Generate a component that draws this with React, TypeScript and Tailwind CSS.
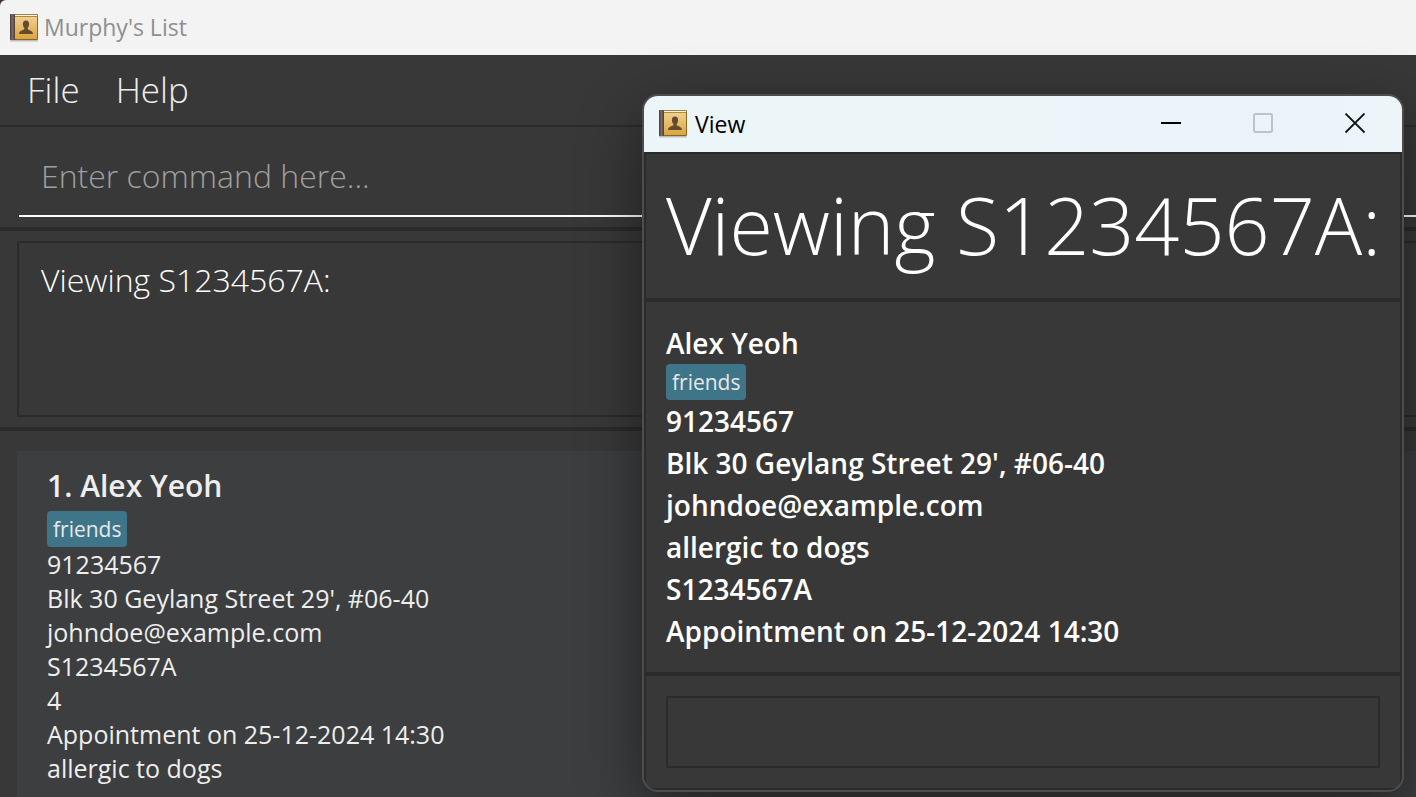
import React from "react";

const person = {
  name: "Alex Yeoh",
  tag: "friends",
  phone: "91234567",
  address: "Blk 30 Geylang Street 29', #06-40",
  email: "johndoe@example.com",
  nric: "S1234567A",
  rating: "4",
  appointment: "Appointment on 25-12-2024 14:30",
  note: "allergic to dogs",
};

function BookIcon({ id }: { id: string }) {
  return (
    <svg width="30" height="30" viewBox="0 0 30 30" aria-hidden="true" className="shrink-0">
      <defs>
        <linearGradient id={id + "-cover"} x1="0" y1="0" x2="0" y2="1">
          <stop offset="0" stopColor="#efd08f" />
          <stop offset="1" stopColor="#dba440" />
        </linearGradient>
        <linearGradient id={id + "-spine"} x1="0" y1="0" x2="1" y2="0">
          <stop offset="0" stopColor="#4a3c38" />
          <stop offset="0.5" stopColor="#7a6b65" />
          <stop offset="1" stopColor="#4a3a34" />
        </linearGradient>
      </defs>
      <rect x="1" y="27" width="28" height="1.5" rx="0.7" fill="#000" opacity="0.22" />
      <rect x="1" y="1" width="28" height="26" rx="1" fill="#8a671f" />
      <rect x="5" y="1.8" width="23.2" height="1.4" fill="#fdf6e4" />
      <rect x="5" y="3.2" width="23.2" height="0.8" fill="#b88a36" />
      <rect x="5.5" y="4" width="22.5" height="22" fill={"url(#" + id + "-cover)"} />
      <rect x="1" y="1" width="5" height="26" rx="1" fill={"url(#" + id + "-spine)"} />
      <path
        d="M17 7.600c2.100 0 3.200 1.500 3.100 3.600-.1 1.700-.7 2.800-1.400 3.500v1.500c1.200 1.100 5.100 1.200 5.300 4.800H10c.2-3.600 4.100-3.700 5.300-4.800v-1.500c-.7-.7-1.300-1.800-1.400-3.500-.1-2.100 1-3.600 3.100-3.600z"
        fill="#614d2c"
      />
    </svg>
  );
}

function Tag({ children }: { children: React.ReactNode }) {
  return (
    <span className="flex h-9 w-fit items-center rounded-sm bg-[#3e7589] px-1.5 text-[21px] font-medium text-[#e8e8e8]">
      {children}
    </span>
  );
}

function ViewWindow() {
  const rows = [
    person.phone,
    person.address,
    person.email,
    person.note,
    person.nric,
    person.appointment,
  ];
  return (
    <section
      role="dialog"
      aria-label="View"
      className="absolute top-[94px] right-3 w-[762px] overflow-hidden rounded-2xl border-2 border-[#4d4d4d] bg-[#383838] shadow-[0_20px_64px_rgba(0,0,0,0.45)]"
    >
      <header className="flex h-14 items-center bg-linear-to-r from-[#ecf5f8] from-50% via-[#ebf3fb] via-75% to-[#ecf5f8] pr-px pl-3.5">
        <BookIcon id="view" />
        <h2 className="ml-[7px] flex-1 text-[23px] text-black">View</h2>
        <button type="button" aria-label="Minimize" className="flex h-14 w-[92px] items-center justify-center">
          <svg width="22" height="22" viewBox="0 0 22 22" stroke="#000" strokeWidth="2">
            <path d="M1 10h20" />
          </svg>
        </button>
        <button type="button" aria-label="Maximize" disabled className="flex h-14 w-[92px] items-center justify-center">
          <svg width="22" height="22" viewBox="0 0 22 22" fill="none" stroke="#bcc4c6" strokeWidth="2">
            <rect x="2" y="1" width="18" height="18" rx="1.5" />
          </svg>
        </button>
        <button type="button" aria-label="Close" className="flex h-14 w-[92px] items-center justify-center">
          <svg width="22" height="22" viewBox="0 0 22 22" stroke="#101418" strokeWidth="1.8">
            <path d="M1.500 0.500l19 19M20.500 0.500l-19 19" />
          </svg>
        </button>
      </header>
      <div className="border-2 border-[#2b2b2b]">
        <h1 className="flex h-36 items-center pb-1 pl-5 text-[79px] leading-none font-light whitespace-nowrap text-white">
          Viewing S1234567A:
        </h1>
        <div className="border-y-4 border-[#2b2b2b] p-5 text-[28px] leading-[42px] font-semibold text-white">
          <p>{person.name}</p>
          <Tag>{person.tag}</Tag>
          {rows.map((row) => (
            <p key={row}>{row}</p>
          ))}
        </div>
        <div className="p-5">
          <div className="h-[72px] border-2 border-[#2b2b2b]" />
        </div>
      </div>
    </section>
  );
}

export default function App() {
  const rows = [
    person.phone,
    person.address,
    person.email,
    person.nric,
    person.rating,
    person.appointment,
    person.note,
  ];
  return (
    <div className="relative flex min-h-screen flex-col overflow-hidden bg-[#383838] font-['Open_Sans','Noto_Sans',sans-serif]">
      <header className="flex h-[55px] items-center rounded-tl-md bg-[#f3f3f3] pl-[9px]">
        <BookIcon id="main" />
        <span className="ml-[5px] text-[23px] text-[#8f8f8f]">Murphy's List</span>
      </header>
      <nav className="flex h-[72px] items-center gap-9 border-b-2 border-[#2b2b2b] pl-[27px] text-[35px] font-light text-[#eeeeee]">
        <button type="button">File</button>
        <button type="button">Help</button>
      </nav>
      <div className="border-b-4 border-[#2b2b2b] pt-3 pb-2.5 pl-[19px]">
        <input
          type="text"
          aria-label="Command"
          placeholder="Enter command here..."
          className="block h-[78px] w-full border-b-2 border-white bg-transparent pb-1 pl-[22px] text-[32px] font-light text-white outline-none placeholder:text-[#a0a0a0]"
        />
      </div>
      <div className="border-b-4 border-[#2b2b2b] py-2.5 pl-[17px]">
        <output className="block h-44 border-2 border-r-0 border-[#2b2b2b] px-[22px] pt-3.5 text-[32px] leading-[46px] font-light text-white">
          Viewing S1234567A:
        </output>
      </div>
      <main className="flex-1 pt-5 pl-[17px]">
        <article className="border-b-2 border-[#2f3031] bg-[#3c3e3f] px-[30px] pt-3 pb-3 text-[25px] leading-[34px] text-[#eeeeee]">
          <h2 className="pb-0.5 text-[30px] leading-[46px] font-semibold">1. {person.name}</h2>
          <Tag>{person.tag}</Tag>
          {rows.map((row) => (
            <p key={row}>{row}</p>
          ))}
        </article>
      </main>
      <ViewWindow />
    </div>
  );
}
